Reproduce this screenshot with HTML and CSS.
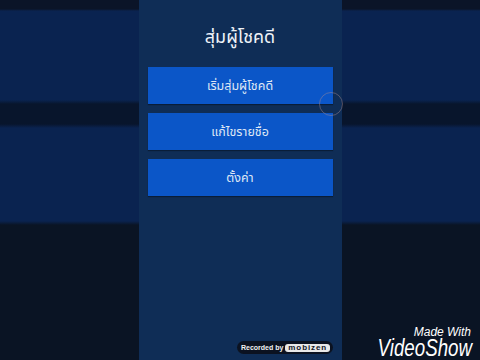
FILE: index.html
```html
<!DOCTYPE html>
<html lang="th">
<head>
<meta charset="utf-8">
<title>สุ่มผู้โชคดี</title>
<link rel="stylesheet" href="styles.css">
</head>
<body>
<div class="frame">
  <div class="side"></div>
  <main class="phone">
    <h1 class="title">สุ่มผู้โชคดี</h1>
    <div class="menu">
      <button class="btn">เริ่มสุ่มผู้โชคดี</button>
      <button class="btn">แก้ไขรายชื่อ</button>
      <button class="btn">ตั้งค่า</button>
    </div>
  </main>
  <div class="side"></div>
  <span class="touch"></span>
  <div class="recorded">Recorded by <span class="mobizen">mobizen</span></div>
  <div class="videoshow">
    <span class="made">Made With</span>
    <span class="vs">VideoShow</span>
  </div>
</div>
</body>
</html>
```
FILE: styles.css
```css
html, body {
  margin: 0;
  padding: 0;
  background: #0a1322;
}
.frame {
  position: relative;
  width: 480px;
  height: 360px;
  display: flex;
  overflow: hidden;
  font-family: "Noto Sans Thai UI", "Noto Sans Thai", "Noto Sans", sans-serif;
}
.side {
  flex: 1 1 0;
  background: linear-gradient(to bottom,
    #0b1428 0px, #0b1428 9px,
    #0a2350 11px, #0a2350 100px,
    #08152c 104px, #08152c 124px,
    #0a2350 128px, #0a2350 221px,
    #0a1424 225px, #0a1424 360px);
}
.phone {
  width: 203px;
  flex: 0 0 203px;
  background: #0f2d56;
  display: flex;
  flex-direction: column;
  align-items: stretch;
  padding: 0 9px;
  box-sizing: border-box;
}
.title {
  margin: 24px 0 0;
  height: 43px;
  font-size: 18px;
  font-weight: 400;
  color: #eef2f8;
  text-align: center;
  line-height: 24px;
}
.menu {
  display: flex;
  flex-direction: column;
  gap: 9px;
}
.btn {
  height: 37px;
  border: none;
  margin: 0;
  padding: 0;
  background: #0b56c8;
  color: #dfe7f5;
  font-family: inherit;
  font-size: 12.5px;
  box-shadow: 0 1px 1px rgba(0,0,0,0.35);
}
.touch {
  position: absolute;
  left: 319px;
  top: 92px;
  width: 24px;
  height: 24px;
  border-radius: 50%;
  border: 1px solid rgba(170,140,145,0.45);
  box-sizing: border-box;
}
.recorded {
  position: absolute;
  left: 237px;
  top: 341px;
  height: 13px;
  padding: 0 3px 0 4px;
  border-radius: 7px;
  background: rgba(10,14,24,0.85);
  color: #f2f2f2;
  font-family: "Liberation Sans", sans-serif;
  font-weight: 700;
  font-size: 7px;
  line-height: 13px;
  white-space: nowrap;
}
.mobizen {
  display: inline-block;
  padding: 0 3px;
  background: #e8e8e8;
  color: #10141f;
  border-radius: 3px;
  line-height: 8px;
  font-size: 8px;
  letter-spacing: 0.9px;
}
.videoshow {
  position: absolute;
  right: 8px;
  bottom: 2px;
  display: flex;
  flex-direction: column;
  align-items: flex-end;
  color: #ffffff;
  font-family: "Liberation Sans", sans-serif;
  font-style: italic;
}
.made {
  font-size: 12px;
  line-height: 12px;
  margin-right: 1px;
}
.vs {
  font-size: 24px;
  line-height: 20px;
  transform: scaleX(0.78);
  transform-origin: right center;
}
```
